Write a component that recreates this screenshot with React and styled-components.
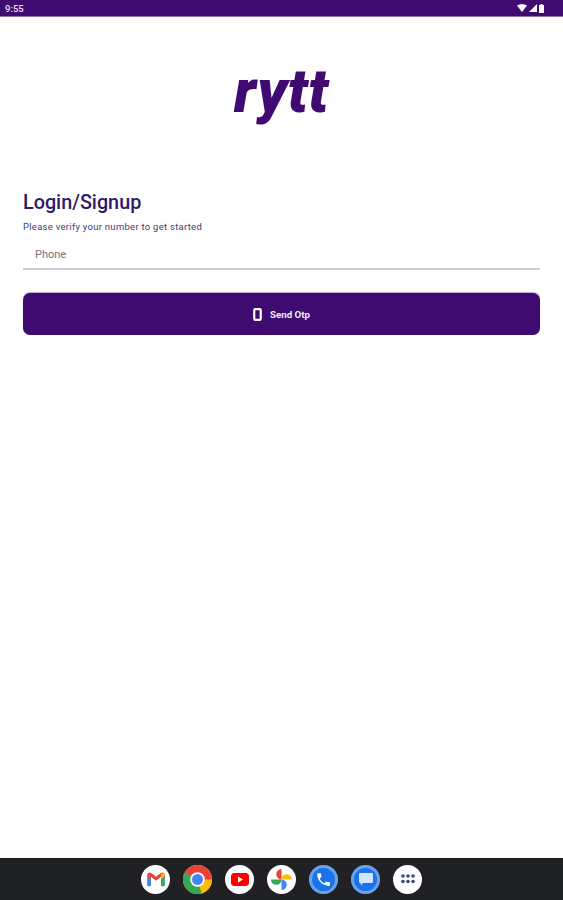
import React from 'react';
import styled, { createGlobalStyle } from 'styled-components';

const GlobalStyle = createGlobalStyle`
  html, body {
    margin: 0;
    padding: 0;
    background: #fff;
  }
  body {
    font-family: Roboto, "Liberation Sans", sans-serif;
  }
`;

const purple = '#3f0b70';

const Screen = styled.div`
  width: 563px;
  height: 900px;
  display: flex;
  flex-direction: column;
  overflow: hidden;
`;

const StatusBar = styled.div`
  height: 16px;
  flex: none;
  padding: 0 19px 0 5px;
  display: flex;
  align-items: center;
  justify-content: space-between;
  background: ${purple};
  border-bottom: 1px solid #8d74ab;
  color: #e9e2f0;
  font-size: 9.5px;
  font-weight: 500;
`;

const StatusIcons = styled.div`
  display: flex;
  align-items: center;
  gap: 2px;
`;

const Main = styled.main`
  flex: 1;
  display: flex;
  flex-direction: column;
  padding: 0 23px;
`;

const Logo = styled.div`
  margin-top: 40px;
  align-self: center;
  color: ${purple};
  font-family: Roboto, "Liberation Sans", sans-serif;
  font-size: 60px;
  line-height: 69px;
  font-weight: 900;
  font-style: italic;
  letter-spacing: 0.5px;
`;

const Title = styled.h1`
  margin: 64px 0 0;
  color: #2f1a6b;
  font-size: 19.8px;
  line-height: 26px;
  font-weight: 500;
`;

const Subtitle = styled.p`
  margin: 5px 0 0;
  color: #453a75;
  font-size: 9.5px;
  line-height: 12px;
  letter-spacing: 0.27px;
`;

const PhoneField = styled.label`
  height: 37px;
  padding: 8px 0 0 12px;
  display: flex;
  align-items: center;
  border-bottom: 2px solid #cfcfd1;
  box-sizing: border-box;
`;

const PhoneInput = styled.input`
  width: 100%;
  border: 0;
  outline: 0;
  padding: 0;
  background: transparent;
  color: #55525a;
  font-family: inherit;
  font-size: 11px;

  &::placeholder {
    color: #77747c;
    opacity: 1;
  }
`;

const SendButton = styled.button`
  margin-top: 23px;
  height: 42px;
  border: 0;
  border-radius: 7px;
  display: flex;
  align-items: center;
  justify-content: center;
  gap: 8px;
  background: ${purple};
  color: #f1edf5;
  font-family: inherit;
  font-size: 9.7px;
  font-weight: 700;
  box-shadow: 0 -1px 1px #b9add0;
`;

const Dock = styled.nav`
  height: 42px;
  flex: none;
  display: flex;
  align-items: center;
  justify-content: center;
  gap: 13px;
  background: #202124;
`;

const DockIcon = styled.div`
  width: 29px;
  height: 29px;
  border-radius: 50%;
  display: flex;
  align-items: center;
  justify-content: center;
  background: ${(p) => p.$bg || '#fff'};
  box-shadow: ${(p) => (p.$ring ? `inset 0 0 0 3px ${p.$ring}` : 'none')};
`;

const Gmail = () => (
  <svg width="20" height="16" viewBox="0 0 18 14">
    <path d="M1 4v8.500c0 .6.4 1 1 1h2.500V6.500z" fill="#4285f4" />
    <path d="M17 4v8.500c0 .6-.4 1-1 1h-2.500V6.500z" fill="#34a853" />
    <path d="M1 4c0-2.500 2.400-3.500 4-2.200L9 5l4-3.200C14.600.5 17 1.500 17 4l-3.500 3.500V5L9 8.500 4.500 5v2.500L1 4z" fill="#ea4335" />
    <path d="M13.500 2.200V7.500L17 4c0-2-1.600-2.900-3.500-1.800z" fill="#fbbc04" />
  </svg>
);

const Chrome = () => (
  <svg width="29" height="29" viewBox="0 0 28 28">
    <circle cx="14" cy="14" r="14" fill="#ea4335" />
    <path d="M14 14L1.900 7A14 14 0 0 0 14 28z" fill="#34a853" />
    <path d="M14 14h14a14 14 0 0 1-14 14z" fill="#fbbc04" />
    <path d="M14 14L8 24.400A14 14 0 0 0 14 28a14 14 0 0 0 4-.6z" fill="#34a853" />
    <circle cx="14" cy="14" r="7" fill="#fff" />
    <circle cx="14" cy="14" r="5.300" fill="#4285f4" />
  </svg>
);

const YouTube = () => (
  <svg width="18" height="13" viewBox="0 0 18 13">
    <rect width="18" height="13" rx="3.500" fill="#f00" />
    <path d="M7 3.500v6l5-3z" fill="#fff" />
  </svg>
);

const Photos = () => (
  <svg width="21" height="21" viewBox="0 0 20 20">
    <path d="M10 10V0a5 5 0 0 0-5 5 5 5 0 0 0 5 5z" fill="#ea4335" />
    <path d="M10 10h10a5 5 0 0 0-5-5 5 5 0 0 0-5 5z" fill="#fbbc04" />
    <path d="M10 10v10a5 5 0 0 0 5-5 5 5 0 0 0-5-5z" fill="#4285f4" />
    <path d="M10 10H0a5 5 0 0 0 5 5 5 5 0 0 0 5-5z" fill="#34a853" />
  </svg>
);

const Phone = () => (
  <svg width="17" height="17" viewBox="0 0 24 24" fill="#fff">
    <path d="M6.600 10.800c1.400 2.800 3.800 5.100 6.600 6.600l2.200-2.200c.3-.3.700-.4 1-.2 1.100.4 2.300.6 3.600.6.600 0 1 .4 1 1V20c0 .6-.4 1-1 1C10.600 21 3 13.400 3 4c0-.6.400-1 1-1h3.500c.6 0 1 .4 1 1 0 1.300.2 2.500.6 3.600.1.300 0 .7-.2 1z" />
  </svg>
);

const Messages = () => (
  <svg width="14" height="13" viewBox="0 0 14 13">
    <path d="M0 1.200C0 .5.500 0 1.200 0h11.600c.7 0 1.200.5 1.200 1.200v7.600c0 .7-.5 1.200-1.200 1.200H4L2 12.500l-.5-2.500C.6 10 0 9.500 0 8.800z" fill="#d2e3fc" />
  </svg>
);

const AppsGrid = () => (
  <svg width="14" height="10" viewBox="0 0 14 10" fill="#3c4a78">
    {[0, 1].map((row) =>
      [0, 1, 2].map((col) => (
        <circle key={`${row}-${col}`} cx={2 + col * 5} cy={2 + row * 5.500} r="1.800" />
      )),
    )}
  </svg>
);

const App = () => (
  <Screen>
    <GlobalStyle />
    <StatusBar>
      <span>9:55</span>
      <StatusIcons>
        <svg width="10" height="8" viewBox="0 0 10 8" fill="#fff">
          <path d="M0 1.500Q5-1.500 10 1.500L5 8z" />
        </svg>
        <svg width="8" height="8" viewBox="0 0 8 8" fill="#fff">
          <path d="M8 0v8H0z" />
        </svg>
        <svg width="5" height="9" viewBox="0 0 5 9" fill="#fff">
          <path d="M1.500 0h2v1H5v8H0V1h1.500z" />
        </svg>
      </StatusIcons>
    </StatusBar>
    <Main>
      <Logo>rytt</Logo>
      <Title>Login/Signup</Title>
      <Subtitle>Please verify your number to get started</Subtitle>
      <PhoneField>
        <PhoneInput placeholder="Phone" />
      </PhoneField>
      <SendButton>
        <svg width="9" height="13" viewBox="0 0 8 12">
          <rect x="1" y="1" width="6" height="10" rx="1" fill="#3f0b70" stroke="#fff" strokeWidth="2" />
        </svg>
        Send Otp
      </SendButton>
    </Main>
    <Dock>
      <DockIcon><Gmail /></DockIcon>
      <DockIcon><Chrome /></DockIcon>
      <DockIcon><YouTube /></DockIcon>
      <DockIcon><Photos /></DockIcon>
      <DockIcon $bg="#1a73e8" $ring="#6f9fe6"><Phone /></DockIcon>
      <DockIcon $bg="#1a73e8" $ring="#6f9fe6"><Messages /></DockIcon>
      <DockIcon><AppsGrid /></DockIcon>
    </Dock>
  </Screen>
);

export default App;
